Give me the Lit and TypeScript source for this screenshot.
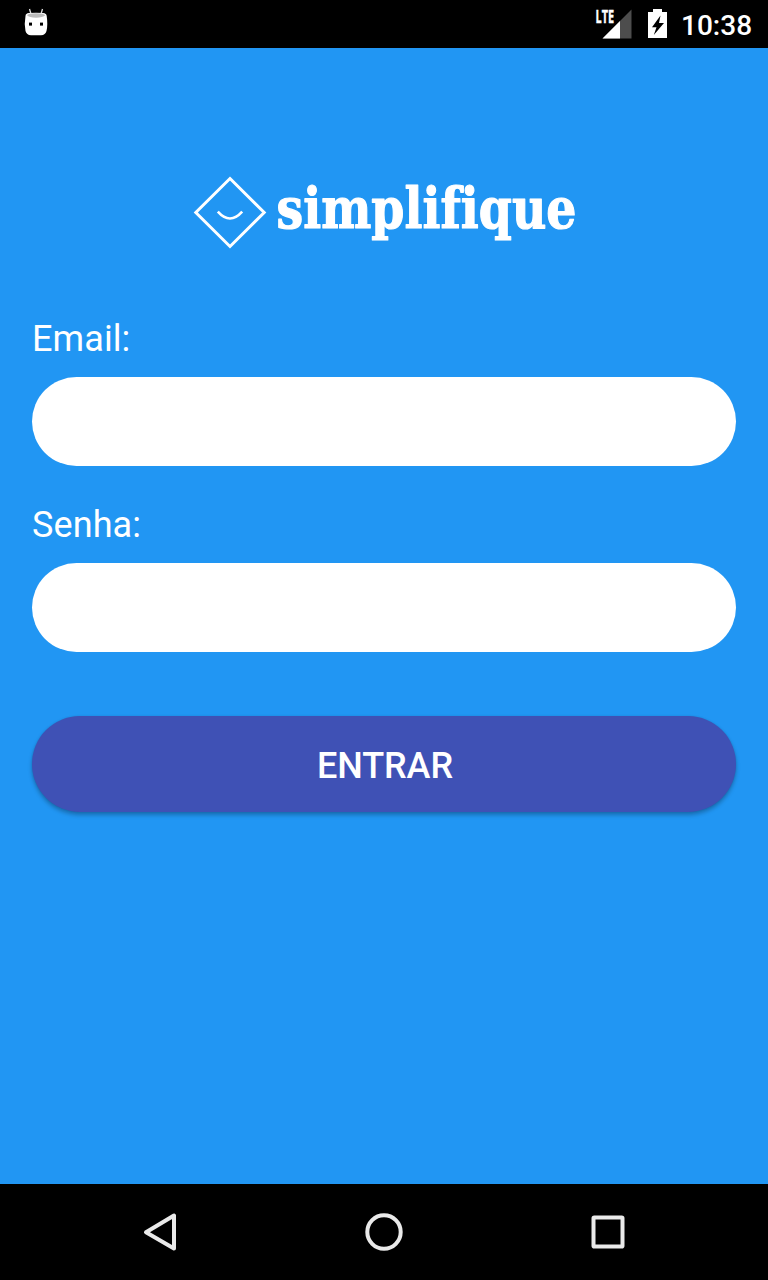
import { LitElement, html, css } from "lit";
import { customElement, property } from "lit/decorators.js";

@customElement("status-bar")
class StatusBar extends LitElement {
  static styles = css`
    :host {
      display: flex;
      align-items: flex-start;
      justify-content: space-between;
      height: 48px;
      background: #000;
      color: #fff;
      font-family: Roboto, sans-serif;
    }
    svg { display: block; }
    .right { display: flex; }
    .clock {
      box-sizing: border-box;
      width: 87px;
      padding-right: 16.5px;
      text-align: right;
      white-space: nowrap;
      font-size: 28px;
      font-weight: 500;
      line-height: 52px;
    }
    .lte {
      font: 700 17px "Open Sans", sans-serif;
      stroke: #fff;
      stroke-width: 0.4px;
    }
  `;
  render() {
    return html`
      <svg width="72" height="48" viewBox="0 0 72 48">
        <path d="M29.5 9 L31 14 M42.5 9 L41 14" stroke="#ddd" stroke-width="1.3" />
        <path d="M25.5 16 Q25.5 13.4 29 13.1 Q36 12.2 43 13.1 Q46.5 13.4 46.7 16 Q48 25 46.5 31 Q45.5 35 41 35.3 H31 Q26.5 35 25.5 31 Q24 24 25.5 16Z" fill="#fff" />
        <path d="M27 15.3 Q28 13.5 36 13.3 Q44 13.5 45.3 15.3 Q43 17.6 36 17.7 Q29 17.6 27 15.3Z" fill="#bbb" />
        <rect x="29" y="22.6" width="3" height="3" fill="#000" />
        <rect x="40" y="22.6" width="3" height="3" fill="#000" />
      </svg>
      <div class="right">
        <svg width="86" height="48" viewBox="595 0 86 48">
          <path d="M602.5 38.5 L631.5 9.5 V38.5Z" fill="#4d4d4d" />
          <path d="M602.5 38.5 L620 21 V38.5Z" fill="#fff" />
          <text class="lte" x="595.5" y="22.6" textLength="18.5" lengthAdjust="spacingAndGlyphs" fill="#fff">LTE</text>
          <path d="M648 12 H653 V9 H662 V12 H667 V38 H648Z" fill="#fff" />
          <path d="M660.5 15.5 L652 27.3 H656.5 L653.8 35 L664 23 H659Z" fill="#000" />
        </svg>
        <div class="clock">10:38</div>
      </div>
    `;
  }
}

@customElement("brand-logo")
class BrandLogo extends LitElement {
  static styles = css`
    :host { display: flex; justify-content: center; }
    svg { display: block; overflow: visible; }
    .word {
      font: 700 56px "DejaVu Serif", serif;
      font-variant-ligatures: none;
      fill: #fff;
      stroke: #fff;
      stroke-width: 1.2px;
      stroke-linejoin: round;
    }
  `;
  render() {
    return html`
      <svg width="400" height="80" viewBox="184 173 400 80">
        <path d="M230 178.5 L264.2 212.5 L230 246.5 L195.8 212.5Z" fill="none" stroke="#fff" stroke-width="3" />
        <path d="M217.8 211.7 Q230 225.3 242.2 211.7" fill="none" stroke="#fff" stroke-width="2.6" />
        <text class="word" x="276.5" y="227.5" textLength="300" lengthAdjust="spacingAndGlyphs">simplifique</text>
      </svg>
    `;
  }
}

@customElement("pill-field")
class PillField extends LitElement {
  @property() label = "";
  @property() type = "text";
  static styles = css`
    :host { display: block; }
    label {
      display: block;
      color: #fff;
      font: 400 36px/42px Roboto, sans-serif;
      letter-spacing: 0.1px;
    }
    input {
      display: block;
      box-sizing: border-box;
      width: 100%;
      height: 89px;
      margin: 17px 0 0;
      padding: 0 40px;
      border: 0;
      outline: 0;
      border-radius: 48px;
      background: #fff;
      font: 400 36px Roboto, sans-serif;
    }
  `;
  render() {
    return html`<label for="field">${this.label}</label><input id="field" type=${this.type} />`;
  }
}

@customElement("nav-bar")
class NavBar extends LitElement {
  static styles = css`
    :host {
      display: flex;
      align-items: center;
      justify-content: center;
      gap: 176px;
      height: 96px;
      background: #000;
    }
    svg { display: block; }
    .stroke { fill: none; stroke: #eaeaea; stroke-width: 4; stroke-linejoin: round; }
  `;
  render() {
    return html`
      <svg width="48" height="48" viewBox="136 1208 48 48"><path class="stroke" d="M174 1215.5 V1248.5 L146 1232.3Z" /></svg>
      <svg width="48" height="48" viewBox="360 1208 48 48"><circle class="stroke" cx="384" cy="1232" r="16.7" /></svg>
      <svg width="48" height="48" viewBox="584 1208 48 48"><rect class="stroke" x="593.5" y="1217.5" width="29" height="29" rx="0.8" /></svg>
    `;
  }
}

@customElement("app-root")
class AppRoot extends LitElement {
  static styles = css`
    :host {
      display: flex;
      flex-direction: column;
      width: 768px;
      height: 1280px;
      background: #2196f3;
    }
    main {
      flex: 1;
      display: flex;
      flex-direction: column;
      padding: 125px 32px 0;
    }
    .email { margin-top: 65px; }
    .password { margin-top: 38px; }
    .enter {
      height: 96px;
      margin-top: 64px;
      padding: 4px 0 0 2px;
      border: 0;
      border-radius: 48px;
      background: #3f51b5;
      box-shadow: 0 3px 4px rgba(0, 0, 0, 0.27), 0 0 2px rgba(0, 0, 0, 0.1);
      color: #fff;
      font: 500 36px/42px Roboto, sans-serif;
      letter-spacing: -0.1px;
    }
  `;
  render() {
    return html`
      <status-bar></status-bar>
      <main>
        <brand-logo></brand-logo>
        <pill-field class="email" label="Email:"></pill-field>
        <pill-field class="password" label="Senha:" type="password"></pill-field>
        <button class="enter">ENTRAR</button>
      </main>
      <nav-bar></nav-bar>
    `;
  }
}
